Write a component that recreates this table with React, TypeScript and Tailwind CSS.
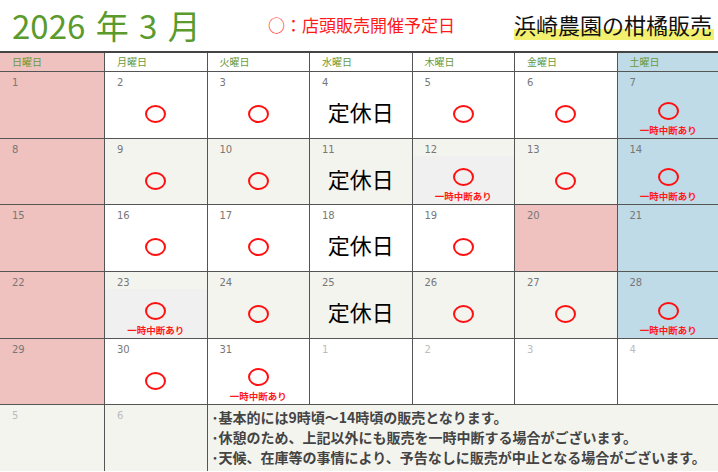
import React from 'react';

type Kind = 'none' | 'open' | 'note' | 'closed';
type Cell = { day: number; kind: Kind; bg: string; dim?: boolean; inner?: boolean };

const JP = "font-['Noto_Sans_CJK_JP','Noto_Sans',sans-serif]";

const W = 'bg-white';
const B = 'bg-[#f4f4ef]';
const PINK = 'bg-[#efc2bf]';
const BLUE = 'bg-[#bfdbe7]';

const heads = ['日曜日', '月曜日', '火曜日', '水曜日', '木曜日', '金曜日', '土曜日'];

const weeks: Cell[][] = [
    [
        { day: 1, kind: 'none', bg: PINK },
        { day: 2, kind: 'open', bg: W },
        { day: 3, kind: 'open', bg: W },
        { day: 4, kind: 'closed', bg: W },
        { day: 5, kind: 'open', bg: W },
        { day: 6, kind: 'open', bg: W },
        { day: 7, kind: 'note', bg: BLUE },
    ],
    [
        { day: 8, kind: 'none', bg: PINK },
        { day: 9, kind: 'open', bg: B },
        { day: 10, kind: 'open', bg: B },
        { day: 11, kind: 'closed', bg: B },
        { day: 12, kind: 'note', bg: B, inner: true },
        { day: 13, kind: 'open', bg: B },
        { day: 14, kind: 'note', bg: BLUE },
    ],
    [
        { day: 15, kind: 'none', bg: PINK },
        { day: 16, kind: 'open', bg: W },
        { day: 17, kind: 'open', bg: W },
        { day: 18, kind: 'closed', bg: W },
        { day: 19, kind: 'open', bg: W },
        { day: 20, kind: 'none', bg: PINK },
        { day: 21, kind: 'none', bg: BLUE },
    ],
    [
        { day: 22, kind: 'none', bg: PINK },
        { day: 23, kind: 'note', bg: B, inner: true },
        { day: 24, kind: 'open', bg: B },
        { day: 25, kind: 'closed', bg: B },
        { day: 26, kind: 'open', bg: B },
        { day: 27, kind: 'open', bg: B },
        { day: 28, kind: 'note', bg: BLUE },
    ],
    [
        { day: 29, kind: 'none', bg: PINK },
        { day: 30, kind: 'open', bg: W },
        { day: 31, kind: 'note', bg: W },
        { day: 1, kind: 'none', bg: W, dim: true },
        { day: 2, kind: 'none', bg: W, dim: true },
        { day: 3, kind: 'none', bg: W, dim: true },
        { day: 4, kind: 'none', bg: W, dim: true },
    ],
];

function Circle() {
    return <div className="w-[21px] h-[18px] rounded-[50%] border-2 border-[#ff1010]" />;
}

function DayCell({ c }: { c: Cell }) {
    const align = c.kind === 'note' ? 'justify-end pb-[2px]' : c.kind === 'closed' ? 'justify-center pb-[5px]' : 'justify-center pt-[1px]';
    return (
        <div className={`flex flex-col ${c.bg}`}>
            <div className={`h-[17px] pl-[12px] pt-[5px] text-[10px] leading-[12px] font-['DejaVu_Sans',sans-serif] ${c.dim ? 'text-[#bbbbbb]' : 'text-[#777777]'}`}>{c.day}</div>
            <div className={`flex-1 flex flex-col items-center ${c.inner ? 'bg-[#f0f0f0]' : ''} ${align}`}>
                {c.kind === 'open' && <Circle />}
                {c.kind === 'note' && (
                    <>
                        <Circle />
                        <div className={`${JP} mt-[4px] text-[9.5px] leading-[12px] font-bold text-[#ff1a1a]`}>一時中断あり</div>
                    </>
                )}
                {c.kind === 'closed' && <div className={`${JP} text-[22px] leading-[26px] text-black`}>定休日</div>}
            </div>
        </div>
    );
}

export default function App() {
    return (
        <div className={`w-[718px] h-[472px] overflow-hidden bg-white ${JP}`}>
            <div className="h-[51px] flex items-center">
                <div className="pl-[12px] w-[268px] text-[33px] leading-[40px] text-[#5b9a2c] pb-[2px] [word-spacing:3px]">2026 年 3 月</div>
                <div className="w-[246px] text-[17px] leading-[22px] text-[#ff1a1a] pb-[1px]">○：店頭販売開催予定日</div>
                <div className="pb-[2px]">
                    <span className="text-[22px] leading-[28px] text-[#111] bg-[linear-gradient(transparent_66%,#f3f070_66%)] pr-[2px]">浜崎農園の柑橘販売</span>
                </div>
            </div>
            <div className="border-t-2 border-[#444] grid grid-cols-[104px_repeat(6,101.5px)] grid-rows-[18px_repeat(6,65.7px)] gap-x-px gap-y-px bg-[#555]">
                {heads.map((h, i) => (
                    <div key={h} className={`pl-[12px] text-[10px] leading-[18px] text-[#6a9a3a] ${i === 0 ? PINK : i === 6 ? BLUE : 'bg-white'}`}>{h}</div>
                ))}
                {weeks.map((w, wi) => w.map((c, ci) => <DayCell key={`${wi}-${ci}`} c={c} />))}
                <DayCell c={{ day: 5, kind: 'none', bg: B, dim: true }} />
                <DayCell c={{ day: 6, kind: 'none', bg: B, dim: true }} />
                <div className="col-span-5 bg-[#f4f4ef] pl-[4px] pt-[2px] text-[14px] leading-[20px] font-bold text-[#444]">
                    <div>･基本的には9時頃～14時頃の販売となります。</div>
                    <div>･休憩のため、上記以外にも販売を一時中断する場合がございます。</div>
                    <div>･天候、在庫等の事情により、予告なしに販売が中止となる場合がございます。</div>
                </div>
            </div>
        </div>
    );
}
